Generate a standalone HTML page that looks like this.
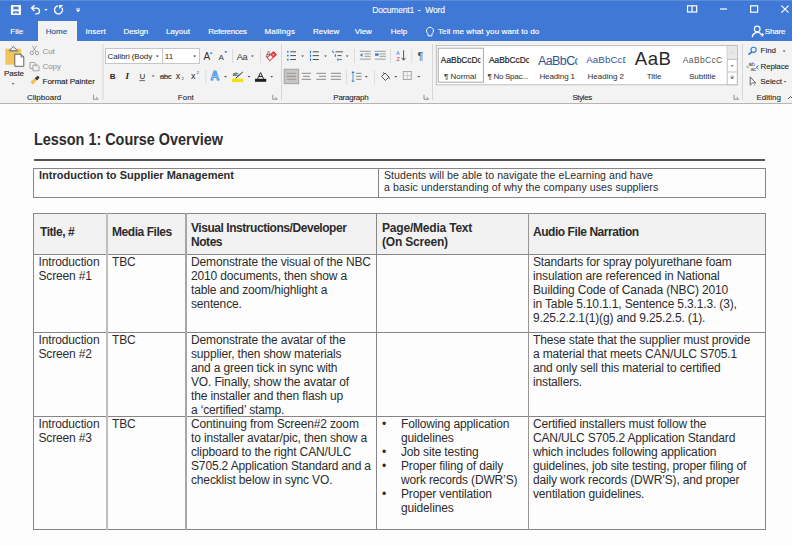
<!DOCTYPE html>
<html><head><meta charset="utf-8">
<style>
*{margin:0;padding:0;box-sizing:border-box}
html,body{width:792px;height:545px;overflow:hidden;background:#fdfdfd;font-family:"Liberation Sans",sans-serif}
.a{position:absolute;white-space:nowrap}
#title{position:absolute;left:0;top:0;width:792px;height:41px;background:#4078d5}
#ribbon{position:absolute;left:0;top:41px;width:792px;height:63px;background:#f3f3f3;border-bottom:1px solid #b9b4b2}
.tab{position:absolute;top:25px;font-size:8px;color:#fff;line-height:10px}
.rb{font-size:8px;color:#262626;line-height:10px}
.grp{position:absolute;top:92px;font-size:8px;color:#262626;line-height:10px}
.sep{position:absolute;width:1px;background:#dadada}
.vsep{position:absolute;width:1px;background:#d0d0d0}
.dt{position:absolute;font-size:12px;line-height:14px;color:#2c2c2c;letter-spacing:-0.15px;white-space:nowrap}
.db{font-weight:bold;letter-spacing:-0.45px}
.hl{position:absolute;background:#8a8585}
.vl{position:absolute;background:#8a8585}
</style></head><body>
<div id="title"></div>
<div id="ribbon"></div>
<div class="a" style="left:0;top:0;width:792px;height:1px;background:#5b8bdb"></div>
<!-- Home tab -->
<div class="a" style="left:38px;top:21px;width:39px;height:21px;background:#f3f3f3"></div>

<svg class="a" style="left:0;top:0" width="792" height="104" viewBox="0 0 792 104" font-family="Liberation Sans, sans-serif">
<!-- QAT -->
<rect x="10.9" y="4.9" width="10.1" height="10.1" rx="0.8" fill="#fff"/>
<rect x="13.3" y="6.7" width="5.3" height="2.7" fill="#4078d5"/>
<path d="M13.1 13.4v-1.2a1 1 0 0 1 1-1h3.7a1 1 0 0 1 1 1v1.2h-2.3v-1h-1.1v1z" fill="#4078d5"/>
<g fill="none" stroke="#fff" stroke-width="1.4">
<path d="M31.8 8.1H36.6a2.9 2.9 0 0 1 0 5.8H35.2"/>
<path d="M34.4 5.3L31.6 8.1L34.4 10.9"/>
<path d="M61.8 7.6A4 4 0 1 1 58.15 5.92"/>
</g>
<path d="M59.1 4.9H63.1L59.1 9Z" fill="#fff"/>
<path d="M44.1 8.9h3.7l-1.85 1.9z" fill="#fff"/>
<path d="M76.2 8.4h3.9M76.4 9.8h3.5l-1.75 2.1z" fill="#fff" stroke="#fff" stroke-width="0.6"/>
<!-- title right icons -->
<g fill="none" stroke="#fff" stroke-width="1.2">
<rect x="687.5" y="5.8" width="9.2" height="6.2"/>
<path d="M692.1 6v6"/>
<path d="M720 9h7"/>
<rect x="750.6" y="5.8" width="7" height="6.4"/>
<path d="M781.4 5.6l7.2 7M788.6 5.6l-7.2 7"/>
<circle cx="757.2" cy="29" r="2.8"/>
<path d="M752.2 37.2a5.2 5.2 0 0 1 8.6-3.4"/>
<path d="M760.5 34.6h3.4M762.2 33v3.4"/>
<path d="M427.8 33.5a3.5 3.5 0 1 1 4.4 0l-0.4 2.4h-3.6z" stroke-width="1"/>
</g>
<g font-size="8.5" fill="#fff" stroke="#fff" stroke-width="0.1"><text x="372.3" y="12.6" letter-spacing="-0.2">Document1</text><text x="417.8" y="12.6">-</text><text x="425.2" y="12.6" letter-spacing="-0.1">Word</text></g>
<!-- tabs text -->
<g font-size="8" fill="#fff" stroke="#fff" stroke-width="0.15">
<text x="10.3" y="34.2">File</text>
<text x="45.8" y="34.2" fill="#2b579a" stroke="#2b579a">Home</text>
<text x="85.6" y="34.2">Insert</text>
<text x="123.4" y="34.2">Design</text>
<text x="165.9" y="34.2">Layout</text>
<text x="208.3" y="34.2" letter-spacing="-0.25">References</text>
<text x="264.5" y="34.2" letter-spacing="0.15">Mailings</text>
<text x="313" y="34.2">Review</text>
<text x="354.7" y="34.2">View</text>
<text x="390.7" y="34.2">Help</text>
<text x="438" y="34.2" letter-spacing="0.1">Tell me what you want to do</text>
<text x="764.8" y="34.2" letter-spacing="-0.2">Share</text>
</g>

<!-- group separators -->
<g fill="#d6d6d6">
<rect x="102.5" y="44" width="1" height="56"/>
<rect x="281" y="44" width="1" height="56"/>
<rect x="432" y="44" width="1" height="56"/>
<rect x="742" y="44" width="1" height="56"/>
</g>
<g fill="#dcdcdc">
<rect x="232" y="49" width="1" height="14"/>
<rect x="260" y="49" width="1" height="14"/>
<rect x="205.3" y="70" width="1" height="14"/>
<rect x="354" y="49" width="1" height="14"/>
<rect x="390" y="49" width="1" height="14"/>
<rect x="411.3" y="49" width="1" height="14"/>
<rect x="346" y="70" width="1" height="14"/>
<rect x="374" y="70" width="1" height="14"/>
</g>
<!-- group labels -->
<g font-size="8" fill="#222" stroke="#222" stroke-width="0.08">
<text x="27" y="99.6">Clipboard</text>
<text x="177.8" y="99.6">Font</text>
<text x="333.3" y="99.6" letter-spacing="-0.25">Paragraph</text>
<text x="572.4" y="99.6" letter-spacing="-0.4">Styles</text>
<text x="756.4" y="99.6">Editing</text>
</g>
<!-- dialog launchers -->
<g fill="none" stroke="#7a7a7a" stroke-width="0.8">
<path d="M93.5 94.8v4.5h4.5M96 97l2.3 2.3"/>
<path d="M272.8 94.8v4.5h4.5M275.3 97l2.3 2.3"/>
<path d="M424 94.8v4.5h4.5M426.5 97l2.3 2.3"/>
<path d="M734 94.8v4.5h4.5M736.5 97l2.3 2.3"/>
<path d="M788 99l2.5-2.5l2.5 2.5" stroke="#444" stroke-width="0.9"/>
</g>

<!-- Clipboard group -->
<rect x="5.3" y="48.6" width="15.8" height="16.1" fill="#f2c55c"/>
<path d="M9 50.8L13.3 46.5L17.6 50.8Z" fill="#f3f3f3" stroke="#5a5a5a" stroke-width="0.9"/>
<rect x="9" y="50" width="8.6" height="1.4" fill="#7a8aa8"/>
<path d="M14.8 54.2H21L23.8 57V66.3H14.8Z" fill="#fff" stroke="#555" stroke-width="0.9"/>
<path d="M21 54.2V57H23.8" fill="none" stroke="#555" stroke-width="0.8"/>
<text x="4" y="76" font-size="8" fill="#222" stroke="#222" stroke-width="0.1" letter-spacing="-0.1">Paste</text>
<path d="M11.8 83.3h2.6l-1.3 1.4z" fill="#444"/>
<g fill="none" stroke="#9a9a9a" stroke-width="0.9">
<circle cx="31.8" cy="53" r="1.7"/>
<circle cx="37" cy="53" r="1.7"/>
<path d="M32.8 51.6L36.6 45.6M36 51.6L32.2 45.6"/>
<path d="M30 62.5h4.5l1.5 1.5v2.5M30 62.5v6h3"/>
<path d="M33 65h4.5l1.5 1.5v4.3h-6z"/>
</g>
<text x="42.4" y="53.9" font-size="8" fill="#8e8e8e">Cut</text>
<text x="42.4" y="69.4" font-size="8" fill="#8e8e8e">Copy</text>
<path d="M30.4 81.8L34.2 78.4L36.4 80.6L33 84.8Z" fill="#f0c24f"/>
<path d="M34.6 78.2L37.8 75.8L39.6 77.4L37 80.4Z" fill="#3a3a3a"/>
<text x="42.6" y="84.4" font-size="8" fill="#222" stroke="#222" stroke-width="0.12" letter-spacing="-0.05">Format Painter</text>

<!-- Font group -->
<rect x="105.5" y="48.5" width="57" height="15" fill="#fff" stroke="#c6c6c6"/>
<rect x="162.5" y="48.5" width="37" height="15" fill="#fff" stroke="#c6c6c6"/>
<text x="107.6" y="58.8" font-size="8" fill="#262626" letter-spacing="-0.1">Calibri (Body</text>
<text x="164.8" y="58.8" font-size="8" fill="#262626">11</text>
<path d="M155.8 55.6h3l-1.5 1.6z M193.2 55.6h3l-1.5 1.6z" fill="#444"/>
<g font-size="10" fill="#333">
<text x="203.6" y="59.8">A</text>
<text x="218.6" y="59.8" font-size="8">A</text>
<text x="236.8" y="59.8" font-size="9.2" letter-spacing="-0.3">Aa</text>
</g>
<path d="M210.2 53.5l1-1.2l1 1.2z" fill="#3d85d8" stroke="#3d85d8" stroke-width="0.6"/>
<path d="M224.6 51.6h2.4l-1.2 1.4z" fill="#3d85d8" stroke="#3d85d8" stroke-width="0.5"/>
<path d="M251 55.5h2.8l-1.4 1.5z" fill="#444"/>
<text x="265.8" y="56.9" font-size="8.4" fill="#333">A</text>
<g transform="translate(271.7,56.2) rotate(-42)"><rect x="-4.4" y="-2" width="8.8" height="4" fill="#fff" stroke="#e2363c" stroke-width="1"/><rect x="0" y="-2" width="4.4" height="4" fill="#e2363c"/><rect x="1.4" y="-0.6" width="1.6" height="1.2" fill="#fff"/></g>
<g font-size="8" fill="#262626">
<text x="109.8" y="79" font-weight="bold">B</text>
<text x="125.4" y="79" font-style="italic" font-weight="bold" font-family="Liberation Serif, serif" font-size="9">I</text>
<text x="139.5" y="79">U</text>
<text x="159.8" y="79" letter-spacing="-0.5">abc</text>
<text x="175.8" y="79" font-size="9">x</text>
<text x="190.9" y="79" font-size="9">x</text>
<text x="181.8" y="80.4" font-size="3.8">2</text>
<text x="196.8" y="74.2" font-size="3.8">2</text>
</g>
<rect x="139.4" y="80.3" width="5.6" height="0.8" fill="#444"/>
<rect x="159.8" y="76" width="10.4" height="0.7" fill="#555"/>
<path d="M151.8 75.6h2.8l-1.4 1.5z" fill="#444"/>
<text x="210.6" y="80.4" font-size="12" font-weight="bold" fill="#fff" stroke="#3a8ee6" stroke-width="0.9">A</text>
<path d="M224.1 76h2.8l-1.4 1.5z" fill="#444"/>
<text x="232.4" y="76.2" font-size="6" fill="#262626" letter-spacing="-0.5">ab</text>
<path d="M235.5 78.5L242.8 72" stroke="#262626" stroke-width="1" />
<rect x="232.1" y="78.7" width="11.1" height="3.4" fill="#f4e300"/>
<path d="M247.6 76h2.8l-1.4 1.5z" fill="#444"/>
<path d="M257.6 78.8L260.6 72.6L263.6 78.8M258.8 76.5h3.6" fill="none" stroke="#262626" stroke-width="1"/>
<rect x="255" y="78.8" width="11.2" height="3" fill="#1e1e1e"/>
<path d="M270.3 76h2.8l-1.4 1.5z" fill="#444"/>

<!-- Paragraph group -->
<g fill="#2b7cd3">
<rect x="287" y="51" width="1.6" height="1.6"/><rect x="287" y="54.8" width="1.6" height="1.6"/><rect x="287" y="58.8" width="1.6" height="1.6"/>
<rect x="309.9" y="50.8" width="1.2" height="2.4"/><rect x="309.9" y="54.6" width="1.2" height="2.4"/><rect x="309.9" y="58.4" width="1.2" height="2.4"/>
<path d="M332 50.2l2.2 2.4l-0.8 0.6l-1.8-2.2z"/><rect x="334.8" y="54.4" width="1.2" height="2.4"/><rect x="337.3" y="58.4" width="1.2" height="2.4"/>
</g>
<g fill="#505050">
<rect x="290.2" y="51.3" width="5.8" height="1"/><rect x="290.2" y="55.1" width="5.8" height="1"/><rect x="290.2" y="59" width="5.8" height="1"/>
<rect x="312.7" y="51.3" width="6.2" height="1"/><rect x="312.7" y="55.1" width="6.2" height="1"/><rect x="312.7" y="59" width="6.2" height="1"/>
<rect x="335.5" y="51.3" width="7.3" height="1"/><rect x="337.5" y="55.1" width="4" height="1"/><rect x="339.5" y="59" width="2" height="1"/>
</g>
<path d="M301.2 55.5h2.8l-1.4 1.5z M324.1 55.5h2.8l-1.4 1.5z M345.8 55.5h2.8l-1.4 1.5z" fill="#444"/>
<!-- indents -->
<g fill="#9a9a9a">
<rect x="359.8" y="50.8" width="11" height="1"/><rect x="364.5" y="53.4" width="6.3" height="1"/><rect x="364.5" y="55.8" width="6.3" height="1"/><rect x="359.8" y="58.6" width="11" height="1"/>
<rect x="374.7" y="50.8" width="11" height="1"/><rect x="379.5" y="53.4" width="6.3" height="1"/><rect x="379.5" y="55.8" width="6.3" height="1"/><rect x="374.7" y="58.6" width="11" height="1"/>
</g>
<path d="M360 55l2.4-2v4z M375 53.5h2.4v-0.8l1.6 1.9l-1.6 1.9v-0.8h-2.4z" fill="#2b7cd3"/>
<!-- sort -->
<text x="396" y="54.8" font-size="5.5" fill="#2b7cd3">A</text>
<text x="396.4" y="60.6" font-size="5.5" fill="#b0308a">Z</text>
<path d="M403.6 50.4v9.6M401.6 57.8l2 2.4l2-2.4" fill="none" stroke="#444" stroke-width="0.9"/>
<text x="417.6" y="60.4" font-size="11" fill="#555">¶</text>
<!-- align -->
<rect x="284.2" y="69.2" width="14.5" height="14.5" fill="#c6c6c6" stroke="#9e9e9e" stroke-width="0.9"/>
<g fill="#8c8c8c">
<rect x="286.6" y="72.8" width="9.6" height="1" fill="#9a9a9a"/><rect x="286.6" y="75.8" width="9.6" height="1" fill="#a08a7a"/><rect x="286.6" y="78.8" width="9.6" height="1" fill="#9a9a9a"/>
<rect x="301.7" y="72.8" width="9.3" height="1"/><rect x="303" y="75.8" width="6.7" height="1"/><rect x="301.7" y="78.8" width="9.3" height="1"/>
<rect x="316.3" y="72.8" width="9.7" height="1"/><rect x="319" y="75.8" width="7" height="1"/><rect x="316.3" y="78.8" width="9.7" height="1"/>
<rect x="330.8" y="72.8" width="10.2" height="1"/><rect x="330.8" y="75.8" width="10.2" height="1"/><rect x="330.8" y="78.8" width="10.2" height="1"/>
</g>
<!-- line spacing -->
<path d="M353 71l-1.6 2h3.2z M353 82.5l-1.6-2h3.2z" fill="#2b7cd3"/>
<rect x="352.6" y="73" width="0.8" height="7.5" fill="#2b7cd3"/>
<g fill="#8c8c8c"><rect x="356" y="72.8" width="5.6" height="1"/><rect x="356" y="75.8" width="5.6" height="1"/><rect x="356" y="78.8" width="5.6" height="1"/></g>
<path d="M364.8 76h2.8l-1.4 1.5z" fill="#444"/>
<!-- shading -->
<path d="M381.5 76.5l3.5-3.5l4 4l-3.5 3.5z" fill="none" stroke="#444" stroke-width="0.9"/>
<path d="M383 72.5l1.6 1.2" stroke="#444" stroke-width="0.9"/>
<path d="M389 76.5q1.4 2 0.6 3.2q-1.2-0.8-0.6-3.2z" fill="#2b7cd3"/>
<path d="M394.4 76h2.8l-1.4 1.5z" fill="#444"/>
<rect x="403.3" y="71.5" width="8" height="8" fill="none" stroke="#a0a0a0" stroke-width="0.9"/>
<path d="M407.3 71.5v8M403.3 75.5h8" stroke="#c0c0c0" stroke-width="0.7"/>
<path d="M417.4 76h2.8l-1.4 1.5z" fill="#444"/>

<!-- Styles gallery -->
<rect x="436.3" y="45.6" width="300.9" height="39.2" fill="#fff" stroke="#b8b8b8" stroke-width="0.9"/>
<rect x="438.2" y="48.2" width="45.2" height="34" fill="#fff" stroke="#a9a9a9" stroke-width="1"/>
<rect x="727.2" y="45.6" width="10" height="39.2" fill="#fff" stroke="#b8b8b8" stroke-width="0.9"/>
<rect x="727.6" y="46" width="9.2" height="13.4" fill="#e8e8e8"/>
<path d="M727.2 59.4h10M727.2 72h10" stroke="#b8b8b8" stroke-width="0.9"/>
<path d="M730.8 53.2l1.4-1.2l1.4 1.2" fill="none" stroke="#bbb" stroke-width="0.6"/>
<path d="M730.6 65.2h3.2l-1.6 1.6z" fill="#555"/>
<path d="M730.4 76.2h3.6M730.8 77.6h2.8l-1.4 1.5z" fill="#555" stroke="#555" stroke-width="0.5"/>
<defs>
<clipPath id="c1"><rect x="438" y="48" width="42.4" height="34"/></clipPath>
<clipPath id="c2"><rect x="486" y="48" width="43" height="34"/></clipPath>
<clipPath id="c3"><rect x="535" y="48" width="42.4" height="34"/></clipPath>
<clipPath id="c4"><rect x="583" y="48" width="42.6" height="34"/></clipPath>
</defs>
<g font-size="8.4" fill="#1e1e1e" stroke="#1e1e1e" stroke-width="0.2">
<text x="440.8" y="62.9" clip-path="url(#c1)">AaBbCcDc</text>
<text x="489" y="62.9" clip-path="url(#c2)">AaBbCcDc</text>
</g>
<g font-size="8" fill="#333" stroke="#333" stroke-width="0.04">
<text x="443.9" y="78.9">¶ Normal</text>
<text x="487.6" y="78.9" letter-spacing="-0.3">¶ No Spac...</text>
<text x="539.4" y="78.9" letter-spacing="-0.1">Heading 1</text>
<text x="587.6" y="78.9">Heading 2</text>
<text x="646.7" y="78.9">Title</text>
<text x="689" y="78.9">Subtitle</text>
</g>
<text x="538" y="64.7" font-size="12.5" fill="#2f5597" letter-spacing="-0.6" clip-path="url(#c3)">AaBbCc</text>
<text x="586.3" y="62.9" font-size="9.7" fill="#2f5597" letter-spacing="0.1" clip-path="url(#c4)">AaBbCcD</text>
<text x="634.8" y="64.7" font-size="18.6" fill="#2a2a2a" letter-spacing="0.5">AaB</text>
<text x="682.8" y="62.9" font-size="8.5" fill="#555" letter-spacing="0.35">AaBbCcC</text>

<!-- Editing -->
<circle cx="753.6" cy="49.8" r="2.6" fill="none" stroke="#2b7cd3" stroke-width="1.1"/>
<path d="M751.8 51.8L748.4 54.6" stroke="#2b7cd3" stroke-width="1.5"/>
<text x="760.5" y="53.4" font-size="8" fill="#222" stroke="#222" stroke-width="0.08">Find</text>
<path d="M782.7 50.4h2.8l-1.4 1.5z" fill="#444"/>
<text x="748.4" y="65.6" font-size="6" fill="#333" letter-spacing="-0.5">a</text>
<text x="751.4" y="65.6" font-size="6" fill="#8a2d9a" letter-spacing="-0.5">b</text>
<text x="750.4" y="70.6" font-size="6" fill="#555" letter-spacing="-0.5">ac</text>
<path d="M746.6 66.4l2 1.4M758.6 65.6l-2.4 1.6l2.4 1.8" fill="none" stroke="#2b7cd3" stroke-width="1"/>
<text x="760.5" y="68.8" font-size="8" fill="#222" stroke="#222" stroke-width="0.08" letter-spacing="-0.15">Replace</text>
<path d="M750.2 76.8v8.4l2.2-2.2h3.4z" fill="none" stroke="#555" stroke-width="0.9"/><path d="M754 85.4l1.4-1.2" stroke="#777" stroke-width="0.8"/>
<text x="760.3" y="84" font-size="8" fill="#222" stroke="#222" stroke-width="0.08" letter-spacing="-0.1">Select</text>
<path d="M783.8 81.1h2.6l-1.3 1.4z" fill="#444"/>
</svg>
<!-- document -->
<div class="dt db" style="left:34px;top:131px;font-size:16px;line-height:18px;letter-spacing:0;transform:scaleX(0.9);transform-origin:0 0">Lesson 1: Course Overview</div>
<div class="a" style="left:34px;top:159px;width:731px;height:2px;background:#565656"></div>

<!-- table 1 -->
<div class="a" style="left:33px;top:168px;width:733px;height:30px;border:1px solid #8a8585"></div>
<div class="vl" style="left:378px;top:168px;width:1px;height:30px"></div>
<div class="dt db" style="left:39px;top:169px;font-size:11px;line-height:12px;letter-spacing:0">Introduction to Supplier Management</div>
<div class="dt" style="left:384px;top:169px;font-size:10.6px;line-height:12px;letter-spacing:0.05px">Students will be able to navigate the eLearning and have<br>a basic understanding of why the company uses suppliers</div>

<!-- table 2 -->
<div class="a" style="left:33px;top:213px;width:733px;height:41px;background:#f2f2f2"></div>
<div class="a" style="left:33px;top:213px;width:733px;height:317px;border:1px solid #8a8585"></div>
<div class="hl" style="left:33px;top:254px;width:733px;height:1px"></div>
<div class="hl" style="left:33px;top:332px;width:733px;height:1px"></div>
<div class="hl" style="left:33px;top:416px;width:733px;height:1px"></div>
<div class="vl" style="left:106px;top:213px;width:2px;height:317px;background:#c2bdba"></div>
<div class="vl" style="left:185px;top:213px;width:2px;height:317px;background:#aaa5a2"></div>
<div class="vl" style="left:376px;top:213px;width:1px;height:317px"></div>
<div class="vl" style="left:528px;top:213px;width:1px;height:317px;background:#9a9590"></div>

<div class="dt db" style="left:40px;top:225px">Title, #</div>
<div class="dt db" style="left:112px;top:225px">Media Files</div>
<div class="dt db" style="left:191px;top:221px">Visual Instructions/Developer<br>Notes</div>
<div class="dt db" style="left:382px;top:221px;letter-spacing:-0.2px">Page/Media Text<br>(On Screen)</div>
<div class="dt db" style="left:533px;top:225px">Audio File Narration</div>

<div class="dt" style="left:38.5px;top:255px">Introduction<br>Screen #1</div>
<div class="dt" style="left:112px;top:255px">TBC</div>
<div class="dt" style="left:191px;top:255px">Demonstrate the visual of the NBC<br>2010 documents, then show a<br>table and zoom/highlight a<br>sentence.</div>
<div class="dt" style="left:533px;top:255px">Standarts for spray polyurethane foam<br>insulation are referenced in National<br>Building Code of Canada (NBC) 2010<br>in Table 5.10.1.1, Sentence 5.3.1.3. (3),<br>9.25.2.2.1(1)(g) and 9.25.2.5. (1).</div>

<div class="dt" style="left:38.5px;top:333px">Introduction<br>Screen #2</div>
<div class="dt" style="left:112px;top:333px">TBC</div>
<div class="dt" style="left:191px;top:333px">Demonstrate the avatar of the<br>supplier, then show materials<br>and a green tick in sync with<br>VO. Finally, show the avatar of<br>the installer and then flash up<br>a ‘certified’ stamp.</div>
<div class="dt" style="left:533px;top:333px">These state that the supplier must provide<br>a material that meets CAN/ULC S705.1<br>and only sell this material to certified<br>installers.</div>

<div class="dt" style="left:38.5px;top:417px">Introduction<br>Screen #3</div>
<div class="dt" style="left:112px;top:417px">TBC</div>
<div class="dt" style="left:191px;top:417px">Continuing from Screen#2 zoom<br>to installer avatar/pic, then show a<br>clipboard to the right CAN/ULC<br>S705.2 Application Standard and a<br>checklist below in sync VO.</div>
<div class="dt" style="left:401px;top:417px">Following application<br>guidelines<br>Job site testing<br>Proper filing of daily<br>work records (DWR’S)<br>Proper ventilation<br>guidelines</div>
<div class="dt" style="left:382px;top:417px">•<br><br>•<br>•<br><br>•</div>
<div class="dt" style="left:533px;top:417px">Certified installers must follow the<br>CAN/ULC S705.2 Application Standard<br>which includes following application<br>guidelines, job site testing, proper filing of<br>daily work records (DWR’S), and proper<br>ventilation guidelines.</div>

</body></html>
